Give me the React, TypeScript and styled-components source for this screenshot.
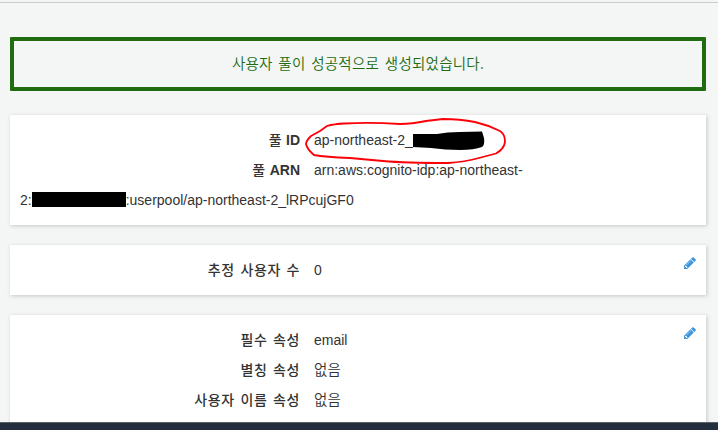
import React from "react";
import styled, { createGlobalStyle } from "styled-components";

const GlobalStyle = createGlobalStyle`
  * { box-sizing: border-box; }
  html, body { margin: 0; background: #f4f6f6; overflow: hidden; }
`;

const Page = styled.div`
  display: flex;
  flex-direction: column;
  height: 430px;
  overflow: hidden;
  background: #f4f6f6;
  color: #333;
  font: 14px/30px "Liberation Sans", "Noto Sans CJK KR", sans-serif;
`;

const TopRule = styled.div`
  flex: none;
  height: 3px;
  border-bottom: 1px solid #c8cccc;
`;

const Content = styled.main`
  flex: 1;
  min-height: 0;
  overflow: hidden;
  display: flex;
  flex-direction: column;
  gap: 20px;
  padding: 34px 12px 0 10px;
`;

const Alert = styled.div`
  flex: none;
  display: flex;
  align-items: center;
  justify-content: center;
  height: 54px;
  margin-bottom: 4px;
  padding-bottom: 2px;
  border: 4px solid #216b10;
  border-radius: 1px;
  color: #216b10;
`;

const Hangul = styled.span`
  font-family: "Noto Sans CJK KR", sans-serif;
  font-size: 14.5px;
  font-weight: 350;
  line-height: 20px;
  letter-spacing: 0.25px;
  word-spacing: 2.2px;
`;

const Card = styled.section<{ $height: number }>`
  position: relative;
  flex: none;
  height: ${(p) => p.$height}px;
  padding: 10px;
  background: #fff;
  box-shadow: 1px 1px 4px 0 rgba(0, 0, 0, 0.19);
`;

const Row = styled.div`
  display: flex;
  gap: 14px;
  height: 30px;
  white-space: nowrap;
`;

const Label = styled.div`
  width: 280px;
  text-align: right;
  font-weight: 700;
`;

const LabelHangul = styled(Hangul)`
  font-size: 14px;
  font-weight: 500;
  letter-spacing: 0.6px;
  word-spacing: 1.9px;
`;

const Value = styled.div``;

const Redaction = styled.span`
  display: inline-block;
  width: 94px;
  height: 15px;
  vertical-align: -2px;
  background: #000;
`;

const Scribble = styled.svg`
  position: absolute;
  left: 290px;
  top: 0;
  width: 210px;
  height: 50px;
  fill: none;
`;

const EditButton = styled.button`
  position: absolute;
  right: 9px;
  top: 11px;
  width: 14px;
  height: 14px;
  padding: 0;
  border: 0;
  background: none;
  color: #3d94d9;
  svg { display: block; }
`;

const Footer = styled.footer`
  flex: none;
  height: 8px;
  border-top: 1px solid #56616b;
  background: #232f3e;
`;

function Edit() {
  return (
    <EditButton aria-label="편집">
      <svg width="14" height="14" viewBox="0 0 1792 1792" fill="currentColor">
        <path d="M491 1536l91-91-235-235-91 91v107h128v128h107zM1014 608q0-22-22-22-10 0-17 7l-542 542q-7 7-7 17 0 22 22 22 10 0 17-7l542-542q7-7 7-17zM960 416l416 416-832 832h-416v-416zM1643 512q0 53-37 90l-166 166-416-416 166-165q36-38 90-38 53 0 91 38l235 234q37 39 37 91z" />
      </svg>
    </EditButton>
  );
}

export default function App() {
  return (
    <>
      <GlobalStyle />
      <Page>
        <TopRule />
        <Content>
          <Alert>
            <Hangul>사용자 풀이 성공적으로 생성되었습니다.</Hangul>
          </Alert>
          <Card $height={110}>
            <Row>
              <Label><LabelHangul>풀</LabelHangul> ID</Label>
              <Value>ap-northeast-2_</Value>
            </Row>
            <Row>
              <Label><LabelHangul>풀</LabelHangul> ARN</Label>
              <Value>arn:aws:cognito-idp:ap-northeast-</Value>
            </Row>
            <Row>
              <Value>2:<Redaction />:userpool/ap-northeast-2_lRPcujGF0</Value>
            </Row>
            <Scribble viewBox="300 115 210 50">
              <path
                fill="#000"
                d="M413 134L437 134Q447 132 460 132L482 131.5L484 138Q485 145 482 147Q474 150 460 150Q445 150 431 148L413 147Z"
              />
              <path
                stroke="#fb0007"
                strokeWidth="1.8"
                strokeLinejoin="round"
                strokeLinecap="round"
                d="M344 123.5Q334 124 327 126L320 131L311 136Q306 141 306 144Q307 149 314 155Q325 157 350 158L383 161Q405 163 448 163Q465 162 479 158L496 153.5Q504 149 505 142Q505 134 500 131Q488 125 475 122Q460 119 443 119L426 121Q412 124 400 124Q370 122 344 123.5Z"
              />
            </Scribble>
          </Card>
          <Card $height={50}>
            <Row>
              <Label><LabelHangul>추정 사용자 수</LabelHangul></Label>
              <Value>0</Value>
            </Row>
            <Edit />
          </Card>
          <Card $height={130}>
            <Row>
              <Label><LabelHangul>필수 속성</LabelHangul></Label>
              <Value>email</Value>
            </Row>
            <Row>
              <Label><LabelHangul>별칭 속성</LabelHangul></Label>
              <Value><Hangul>없음</Hangul></Value>
            </Row>
            <Row>
              <Label><LabelHangul>사용자 이름 속성</LabelHangul></Label>
              <Value><Hangul>없음</Hangul></Value>
            </Row>
            <Edit />
          </Card>
        </Content>
        <Footer />
      </Page>
    </>
  );
}
